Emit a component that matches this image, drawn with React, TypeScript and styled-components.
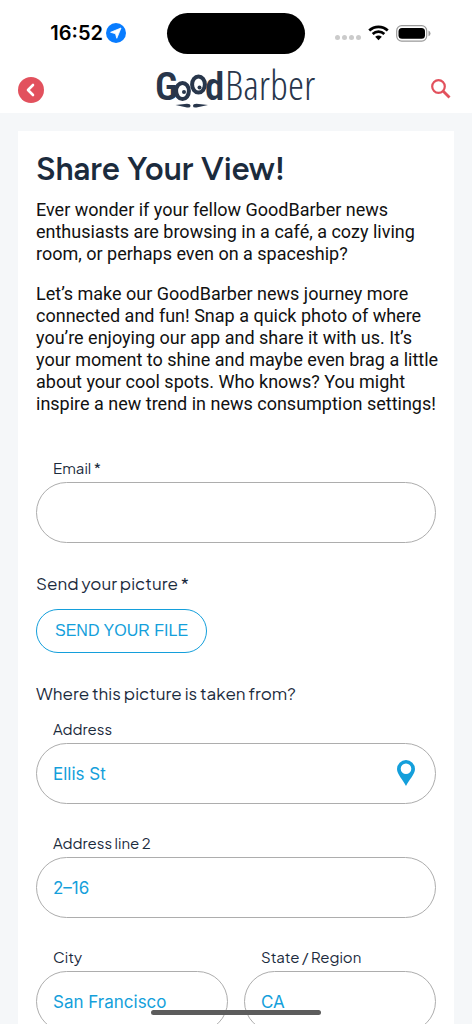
import React from "react";
import styled, { createGlobalStyle } from "styled-components";

const navy = "#1b2b3d";
const blue = "#149fdb";
const red = "#e2515d";

const GlobalStyle = createGlobalStyle`
  * { box-sizing: border-box; }
  body { margin: 0; background: #f5f7f9; font-family: Roboto, "Liberation Sans", sans-serif; }
`;

const Screen = styled.div`
  height: 100vh;
  display: flex;
  flex-direction: column;
  overflow: hidden;
`;

const Top = styled.header`
  flex: none;
  background: #fff;
`;

const StatusBar = styled.div`
  display: grid;
  grid-template-columns: 1fr 138px 1fr;
  align-items: center;
  height: 66px;
`;

const StatusLeft = styled.div`
  display: flex;
  align-items: center;
  justify-content: flex-end;
  gap: 3px;
  padding-right: 41px;
`;

const Clock = styled.time`
  font-family: Inter, "Liberation Sans", sans-serif;
  font-size: 20px;
  font-weight: 600;
  line-height: 24px;
  color: #000;
`;

const Island = styled.div`
  height: 41px;
  border-radius: 21px;
  background: #000;
`;

const StatusRight = styled.div`
  display: flex;
  align-items: center;
  gap: 7px;
  padding-left: 30px;
`;

const Signal = styled.div`
  display: flex;
  gap: 2px;
  padding-top: 8px;
`;

const SignalDot = styled.span`
  width: 5px;
  height: 5px;
  border-radius: 50%;
  background: #cbcbcb;
`;

const NavBar = styled.nav`
  display: grid;
  grid-template-columns: 1fr auto 1fr;
  align-items: center;
  height: 47px;
  padding: 0 18px;
`;

const IconButton = styled.button<{ $end?: boolean }>`
  display: flex;
  justify-self: ${(p) => (p.$end ? "end" : "start")};
  padding: 0;
  border: 0;
  background: none;
  cursor: pointer;
`;

const LogoLink = styled.a`
  display: flex;
`;

const LogoSvg = styled.svg`
  overflow: visible;
`;

const Content = styled.main`
  flex: 1;
  min-height: 0;
  padding: 18px;
  overflow-y: auto;
  scrollbar-width: none;
`;

const Card = styled.form`
  padding: 18px;
  background: #fff;
`;

const Title = styled.h1`
  margin: 0 0 10px;
  font-family: Figtree, "DM Sans", Lato, sans-serif;
  font-size: 32px;
  font-weight: 600;
  line-height: 40px;
  color: ${navy};
`;

const Paragraph = styled.p`
  margin: 0 -6px 18px 0;
  font-size: 18px;
  line-height: 22px;
  color: #111;
`;

const Fields = styled.div`
  display: grid;
  grid-template-columns: 1fr 1fr;
  column-gap: 16px;
  row-gap: 29px;
`;

const Field = styled.div<{ $half?: boolean }>`
  grid-column: ${(p) => (p.$half ? "auto" : "1 / -1")};
  display: flex;
  flex-direction: column;
  gap: 4px;
  min-width: 0;
`;

const Label = styled.label`
  padding-left: 17px;
  font-family: "Plus Jakarta Sans", Inter, sans-serif;
  font-size: 15px;
  line-height: 20px;
  color: ${navy};
`;

const InputWrap = styled.div`
  position: relative;
  display: flex;
`;

const Input = styled.input`
  width: 100%;
  height: 61px;
  padding: 0 16px;
  border: 1px solid #adadad;
  border-radius: 31px;
  background: #fff;
  font-family: Inter, Roboto, sans-serif;
  font-size: 17px;
  color: ${blue};
  outline: none;
`;

const PinButton = styled.button`
  position: absolute;
  top: 17px;
  right: 21px;
  display: flex;
  padding: 0;
  border: 0;
  background: none;
`;

const EmailBlock = styled.div`
  padding-top: 25px;
`;

const Section = styled.section`
  padding-top: 28px;
`;

const SectionTitle = styled.h2`
  margin: 0 0 14px;
  font-family: "Plus Jakarta Sans", Inter, sans-serif;
  font-size: 17px;
  font-weight: 400;
  line-height: 24px;
  color: ${navy};
`;

const FileButton = styled.button`
  height: 44px;
  padding: 0 18px;
  border: 1px solid ${blue};
  border-radius: 22px;
  background: #fff;
  font-family: "Liberation Sans", Arial, sans-serif;
  font-size: 16px;
  color: ${blue};
`;

const HomeIndicator = styled.div`
  position: fixed;
  bottom: 9px;
  left: 50%;
  width: 170px;
  height: 5px;
  margin-left: -85px;
  border-radius: 3px;
  background: #5c5c5c;
`;

const Logo = () => (
  <LogoSvg width="160" height="42" viewBox="0 0 160 42" role="img" aria-label="GoodBarber">
    <g fill="#28364b">
      <g fontFamily='"Roboto Condensed", "Open Sans Condensed", Roboto, sans-serif' fontWeight="600">
        <text x="-1" y="31" fontSize="39">G</text>
        <text x="49" y="31" fontSize="39">d</text>
      </g>
      <text x="69" y="31" fontSize="41" fontWeight="300" fontFamily='"Open Sans Condensed Light", "Open Sans Condensed", "Roboto Condensed", sans-serif'>Barber</text>
    </g>
    <g fill="#fff" stroke="#28364b" strokeWidth="4">
      <ellipse cx="26.500" cy="22" rx="6.400" ry="8" />
      <ellipse cx="42.500" cy="15.500" rx="6.400" ry="8" />
    </g>
    <g fill="#28364b">
      <circle cx="28" cy="23" r="2" />
      <circle cx="43.500" cy="18.500" r="2" />
      <path d="M19.500 36 L31 34.800 Q34.500 34.800 34.500 37 Q34.500 39 31 38.500Z" />
      <path d="M52 36 L40.500 34.800 Q37 34.800 37 37 Q37 39 40.500 38.500Z" />
    </g>
  </LogoSvg>
);

type FieldProps = { id: string; label: string; value?: string; half?: boolean; type?: string; children?: React.ReactNode };

const TextField = ({ id, label, value, half, type = "text", children }: FieldProps) => (
  <Field $half={half}>
    <Label htmlFor={id}>{label}</Label>
    <InputWrap>
      <Input id={id} name={id} type={type} defaultValue={value} />
      {children}
    </InputWrap>
  </Field>
);

export default function App() {
  return (
    <Screen>
      <GlobalStyle />
      <Top>
        <StatusBar>
          <StatusLeft>
            <Clock>16:52</Clock>
            <svg width="20" height="20" viewBox="0 0 20 20" aria-hidden="true">
              <circle cx="10" cy="10" r="10" fill="#087cff" />
              <path d="M15 5 L10.800 15.300 L9.500 10.700 L4.600 9.300Z" fill="#fff" stroke="#fff" strokeWidth="0.8" strokeLinejoin="round" />
            </svg>
          </StatusLeft>
          <Island />
          <StatusRight>
            <Signal>
              <SignalDot /><SignalDot /><SignalDot /><SignalDot />
            </Signal>
            <svg width="21" height="16" viewBox="0 0 22 16" aria-label="Wi-Fi">
              <g fill="none" stroke="#000" strokeWidth="2.800">
                <path d="M1.300 5.400 A14 14 0 0 1 20.700 5.400" />
                <path d="M4.900 9 A9 9 0 0 1 17.100 9" />
              </g>
              <path d="M7.500 12 Q11 9.200 14.500 12 L11 15.600Z" />
            </svg>
            <svg width="35" height="17" viewBox="0 0 35 17" aria-label="Battery">
              <rect x="0.700" y="0.700" width="30" height="15.400" rx="5" fill="none" stroke="#999" strokeWidth="1.200" />
              <rect x="2.500" y="3" width="26.500" height="10.800" rx="3.500" />
              <path d="M32.500 5.500 Q34.500 6.500 34.500 8.400 T32.500 11.300Z" fill="#999" />
            </svg>
          </StatusRight>
        </StatusBar>
        <NavBar>
          <IconButton type="button" aria-label="Back">
            <svg width="26" height="26" viewBox="0 0 26 26">
              <circle cx="13" cy="13" r="13" fill={red} />
              <path d="M15 8 L10 13 L15 18" fill="none" stroke="#fff" strokeWidth="2.600" strokeLinecap="round" strokeLinejoin="round" />
            </svg>
          </IconButton>
          <LogoLink href="#home"><Logo /></LogoLink>
          <IconButton type="button" aria-label="Search" $end>
            <svg width="24" height="24" viewBox="0 0 24 24">
              <g fill="none" stroke={red} strokeWidth="2.200">
                <circle cx="8.500" cy="8.500" r="6.300" />
                <path d="M13 13 L19.500 19.500" strokeWidth="2.800" />
              </g>
            </svg>
          </IconButton>
        </NavBar>
      </Top>
      <Content>
        <Card>
          <Title>Share Your View!</Title>
          <Paragraph>
            Ever wonder if your fellow GoodBarber news enthusiasts are browsing in a café, a cozy living room, or perhaps even on a spaceship?
          </Paragraph>
          <Paragraph>
            Let’s make our GoodBarber news journey more connected and fun! Snap a quick photo of where you’re enjoying our app and share it with us. It’s your moment to shine and maybe even brag a little about your cool spots. Who knows? You might inspire a new trend in news consumption settings!
          </Paragraph>
          <EmailBlock>
            <TextField id="email" label="Email *" type="email" />
          </EmailBlock>
          <Section>
            <SectionTitle>Send your picture *</SectionTitle>
            <FileButton type="button">SEND YOUR FILE</FileButton>
          </Section>
          <Section>
            <SectionTitle>Where this picture is taken from?</SectionTitle>
            <Fields>
              <TextField id="address" label="Address" value="Ellis St">
                <PinButton type="button" aria-label="Pick on map">
                  <svg width="18" height="26" viewBox="0 0 18 26">
                    <path fillRule="evenodd" fill={blue} d="M9 0 A9 9 0 0 1 18 9 C18 14 12 20 9 26 C6 20 0 14 0 9 A9 9 0 0 1 9 0Z M9 3.500 A5.300 5.300 0 1 0 9 14.100 A5.300 5.300 0 1 0 9 3.500Z" />
                  </svg>
                </PinButton>
              </TextField>
              <TextField id="address2" label="Address line 2" value="2–16" />
              <TextField id="city" label="City" value="San Francisco" half />
              <TextField id="region" label="State / Region" value="CA" half />
            </Fields>
          </Section>
        </Card>
      </Content>
      <HomeIndicator />
    </Screen>
  );
}
